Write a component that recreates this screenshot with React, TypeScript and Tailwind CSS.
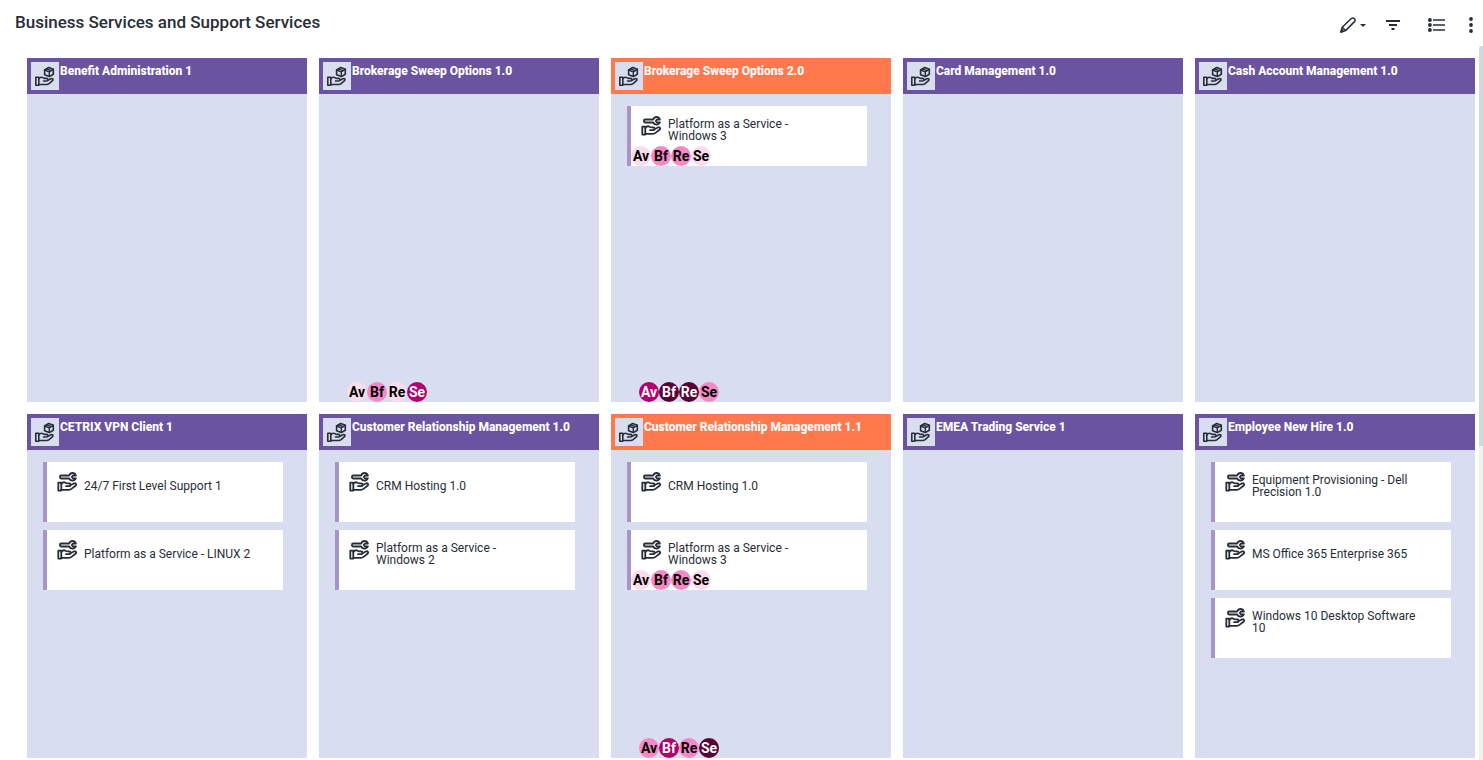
type Tone = 'pale' | 'pink' | 'magenta' | 'plum';
type Badge = [label: string, tone: Tone];

interface Item {
  name: string;
  badges?: Badge[];
}

interface Service {
  name: string;
  accent?: boolean;
  items?: Item[];
  badges?: Badge[];
}

const tones: Record<Tone, string> = {
  pale: 'bg-[#fddcee] text-black',
  pink: 'bg-[#f688c5] text-black',
  magenta: 'bg-[#b4006c] text-white',
  plum: 'bg-[#5b0034] text-white',
};

const platformBadges: Badge[] = [
  ['Av', 'pale'],
  ['Bf', 'pink'],
  ['Re', 'pink'],
  ['Se', 'pale'],
];

const services: Service[] = [
  { name: 'Benefit Administration 1' },
  {
    name: 'Brokerage Sweep Options 1.0',
    badges: [['Av', 'pale'], ['Bf', 'pink'], ['Re', 'pale'], ['Se', 'magenta']],
  },
  {
    name: 'Brokerage Sweep Options 2.0',
    accent: true,
    items: [{ name: 'Platform as a Service - Windows 3', badges: platformBadges }],
    badges: [['Av', 'magenta'], ['Bf', 'plum'], ['Re', 'plum'], ['Se', 'pink']],
  },
  { name: 'Card Management 1.0' },
  { name: 'Cash Account Management 1.0' },
  {
    name: 'CETRIX VPN Client 1',
    items: [{ name: '24/7 First Level Support 1' }, { name: 'Platform as a Service - LINUX 2' }],
  },
  {
    name: 'Customer Relationship Management 1.0',
    items: [{ name: 'CRM Hosting 1.0' }, { name: 'Platform as a Service - Windows 2' }],
  },
  {
    name: 'Customer Relationship Management 1.1',
    accent: true,
    items: [
      { name: 'CRM Hosting 1.0' },
      { name: 'Platform as a Service - Windows 3', badges: platformBadges },
    ],
    badges: [['Av', 'pink'], ['Bf', 'magenta'], ['Re', 'pink'], ['Se', 'plum']],
  },
  { name: 'EMEA Trading Service 1' },
  {
    name: 'Employee New Hire 1.0',
    items: [
      { name: 'Equipment Provisioning - Dell Precision 1.0' },
      { name: 'MS Office 365 Enterprise 365' },
      { name: 'Windows 10 Desktop Software 10' },
    ],
  },
];

function BusinessIcon() {
  return (
    <svg viewBox="0 0 20 20" className="size-5" fill="none" stroke="#272d37" strokeWidth="1.6" strokeLinejoin="round" strokeLinecap="round" aria-hidden="true">
      <path d="M9.600 8.800V4L13.700 1.500 18.300 3.300V8.200L14.300 10.600z" />
      <path d="M9.600 4L14.200 5.900 18.300 3.300M14.300 6V10.400M11.700 2.900L16.200 4.700" strokeWidth="1.400" />
      <path d="M.8 11.300h3v7.900H.8z" />
      <path d="M3.800 12.600c1.300-1.400 2.700-1.700 4-1 .8.500 1.300.8 2.200.8h1.500c1.800 0 1.800 2.600 0 2.600H8.500" />
      <path d="M12.900 14.200l3.100-1.500c1.700-.8 2.700 1 1.500 2l-3.400 2.900c-.8.600-1.600.900-2.500.9H3.800" />
    </svg>
  );
}

function SupportIcon() {
  return (
    <svg viewBox="0 0 20 20" className="size-5 shrink-0" fill="none" stroke="#272d37" strokeWidth="1.8" strokeLinejoin="round" strokeLinecap="round" aria-hidden="true">
      <path d="M12.200 3.500H4.400a1.500 1.500 0 0 0 0 3h7.800c.9 1.700 2.700 2.400 4.400 1.900 1.100-.3 1.900-1 2.300-2.100h-3L14.800 5l1.100-1.400h3C18.300 1.900 16.900 1 15.400 1c-1.400 0-2.600.9-3.200 2.500z" />
      <path d="M1.300 10.600h3v8h-3z" />
      <path d="M4.300 11.800c1.300-1.500 2.900-1.900 4.200-1.100.8.5 1.400.7 2.300.7h1.400c1.900 0 1.900 2.700 0 2.700H9" />
      <path d="M13.400 13.200l3.500-1.700c1.900-.8 3 1.200 1.600 2.300l-4 3.100c-.8.600-1.600.9-2.600.9H4.300" />
    </svg>
  );
}

function Badges({ list }: { list: Badge[] }) {
  return (
    <ul className="flex h-5">
      {list.map(([label, tone]) => (
        <li key={label} className={`flex size-5 items-center justify-center rounded-full text-sm leading-5 font-bold ${tones[tone]}`}>
          {label}
        </li>
      ))}
    </ul>
  );
}

function ItemCard({ item }: { item: Item }) {
  return (
    <li className="flex h-15 flex-col border-l-4 border-[#a795c8] bg-white">
      <div className="flex h-10 items-center gap-[7px] pl-[10px]">
        <SupportIcon />
        <p className="max-w-[168px] pt-2 text-xs leading-3 text-[#272d37]">{item.name}</p>
      </div>
      {item.badges && <Badges list={item.badges} />}
    </li>
  );
}

function ServiceTile({ service }: { service: Service }) {
  return (
    <section className="flex h-[344px] flex-col bg-[#d8ddef]">
      <header className={`flex h-9 gap-px p-1 ${service.accent ? 'bg-[#ff794d]' : 'bg-[#6a53a1]'}`}>
        <span className="flex size-7 shrink-0 items-center justify-center bg-[#d8ddef]">
          <BusinessIcon />
        </span>
        <h2 className="text-xs leading-[18px] font-extrabold text-white">{service.name}</h2>
      </header>
      <ul className="flex grow flex-col gap-2 pt-3 pr-6 pl-4">
        {service.items?.map((item) => <ItemCard key={item.name} item={item} />)}
      </ul>
      {service.badges && (
        <div className="pl-7">
          <Badges list={service.badges} />
        </div>
      )}
    </section>
  );
}

function Toolbar() {
  return (
    <div className="flex items-center text-[#272d37]">
      <button type="button" aria-label="Edit" className="mr-5 flex items-center gap-1">
        <svg viewBox="0 0 16 16" className="size-4" fill="none" stroke="currentColor" strokeWidth="1.5" strokeLinejoin="round" aria-hidden="true">
          <path d="M.9 15.100l1.300-4.800L11.300 1.500c1.900-1.600 4.900 1 3.200 3.100L5.600 13.600z" />
          <path d="M2.200 10.300l3.400 3.300" />
          <path d="M.9 15.100l.7-2.500 1.800 1.700z" fill="currentColor" />
        </svg>
        <svg viewBox="0 0 6 3" className="h-[3px] w-[6px]" fill="currentColor" aria-hidden="true">
          <path d="M0 0h6L3 3z" />
        </svg>
      </button>
      <button type="button" aria-label="Filter" className="mr-7">
        <svg viewBox="0 0 14 10" className="h-[10px] w-[14px]" fill="currentColor" aria-hidden="true">
          <path d="M0 0h14v2H0zM3 4h8v2H3zM5.500 8h3v2h-3z" />
        </svg>
      </button>
      <button type="button" aria-label="List view" className="mr-6">
        <svg viewBox="0 0 17 14" className="h-[14px] w-[17px]" fill="currentColor" aria-hidden="true">
          <circle cx="1.900" cy="2" r="1.900" />
          <circle cx="1.900" cy="7" r="1.900" />
          <circle cx="1.900" cy="12" r="1.900" />
          <path d="M5 1.200h12v1.600H5zM5 6.200h12v1.600H5zM5 11.200h12v1.600H5z" />
        </svg>
      </button>
      <button type="button" aria-label="More options">
        <svg viewBox="0 0 4 16" className="h-4 w-1" fill="currentColor" aria-hidden="true">
          <circle cx="2" cy="2" r="1.900" />
          <circle cx="2" cy="8" r="1.900" />
          <circle cx="2" cy="14" r="1.900" />
        </svg>
      </button>
    </div>
  );
}

export default function App() {
  return (
    <div className="flex min-h-screen flex-col bg-white font-['Roboto',sans-serif]">
      <header className="flex h-[46px] items-start justify-between pr-[10px] pl-[15px]">
        <h1 className="pt-[10px] text-[17px] leading-6 font-medium text-[#272d37]">
          Business Services and Support Services
        </h1>
        <div className="pt-[17px]">
          <Toolbar />
        </div>
      </header>
      <div className="flex grow">
        <main className="grid grow grid-cols-5 content-start gap-3 pt-3 pr-1 pb-[2px] pl-[27px]">
          {services.map((service) => (
            <ServiceTile key={service.name} service={service} />
          ))}
        </main>
        <div className="flex w-1 flex-col bg-[#f1f1f1]" aria-hidden="true">
          <div className="basis-[56%] rounded-tl-sm bg-[#d0d8e0]" />
        </div>
      </div>
    </div>
  );
}
